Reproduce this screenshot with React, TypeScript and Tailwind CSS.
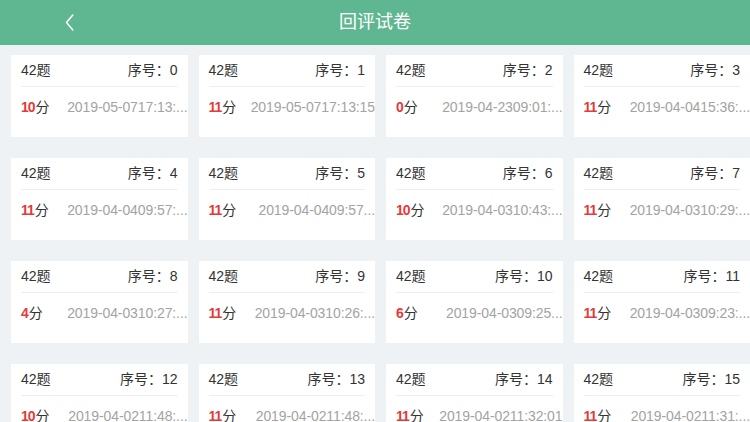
import React from 'react';

type Paper = { idx: number; score: number; time: string };

// times as the list shows them (long ones already shortened by the app)
const papers: Paper[] = [
  { idx: 0, score: 10, time: '2019-05-0717:13:...' },
  { idx: 1, score: 11, time: '2019-05-0717:13:15' },
  { idx: 2, score: 0, time: '2019-04-2309:01:...' },
  { idx: 3, score: 11, time: '2019-04-0415:36:...' },
  { idx: 4, score: 11, time: '2019-04-0409:57:...' },
  { idx: 5, score: 11, time: '2019-04-0409:57...' },
  { idx: 6, score: 10, time: '2019-04-0310:43:...' },
  { idx: 7, score: 11, time: '2019-04-0310:29:...' },
  { idx: 8, score: 4, time: '2019-04-0310:27:...' },
  { idx: 9, score: 11, time: '2019-04-0310:26:...' },
  { idx: 10, score: 6, time: '2019-04-0309:25...' },
  { idx: 11, score: 11, time: '2019-04-0309:23:...' },
  { idx: 12, score: 10, time: '2019-04-0211:48:...' },
  { idx: 13, score: 11, time: '2019-04-0211:48:...' },
  { idx: 14, score: 11, time: '2019-04-0211:32:01' },
  { idx: 15, score: 11, time: '2019-04-0211:31:...' },
];

function PaperCard({ paper }: { paper: Paper }) {
  return (
    <div className="h-[82px] bg-white flex flex-col min-w-0">
      <div className="h-[31px] flex items-center justify-between px-[10px] text-[14px] text-[#333]">
        <span>42题</span>
        <span>序号：{paper.idx}</span>
      </div>
      <div className="mx-[10px] h-px bg-[#efefef]" />
      <div className="h-[40px] flex items-center pl-[10px] text-[14px]">
        <span className="shrink-0 text-[#333]">
          <span className="text-[#e53a3a] font-semibold tracking-[-1px] mr-px">{paper.score}</span>分
        </span>
        <span className="flex-1 min-w-0 ml-[8px] whitespace-nowrap overflow-hidden text-right tracking-[-0.1px] text-[#a3a3a3]">
          {paper.time}
        </span>
      </div>
    </div>
  );
}

export default function App() {
  return (
    <div
      className="w-[750px] h-[422px] overflow-hidden bg-[#eef2f4] flex flex-col"
      style={{ fontFamily: '"Liberation Sans", "Noto Sans CJK SC", sans-serif' }}
    >
      <div className="h-[45px] shrink-0 bg-[#5fb791] relative flex items-center justify-center">
        <svg className="absolute left-[65px] top-[14px]" width="9" height="17" viewBox="0 0 9 17" fill="none">
          <path d="M7.8 1 L1.5 8.5 L7.8 16" stroke="white" strokeWidth="1.5" strokeLinecap="round" strokeLinejoin="round" />
        </svg>
        <span className="text-white text-[18px]">回评试卷</span>
      </div>
      <div className="grid grid-cols-4 gap-x-[11px] gap-y-[21px] pl-[11px] pt-[10px]">
        {papers.map((p) => (
          <PaperCard key={p.idx} paper={p} />
        ))}
      </div>
    </div>
  );
}
